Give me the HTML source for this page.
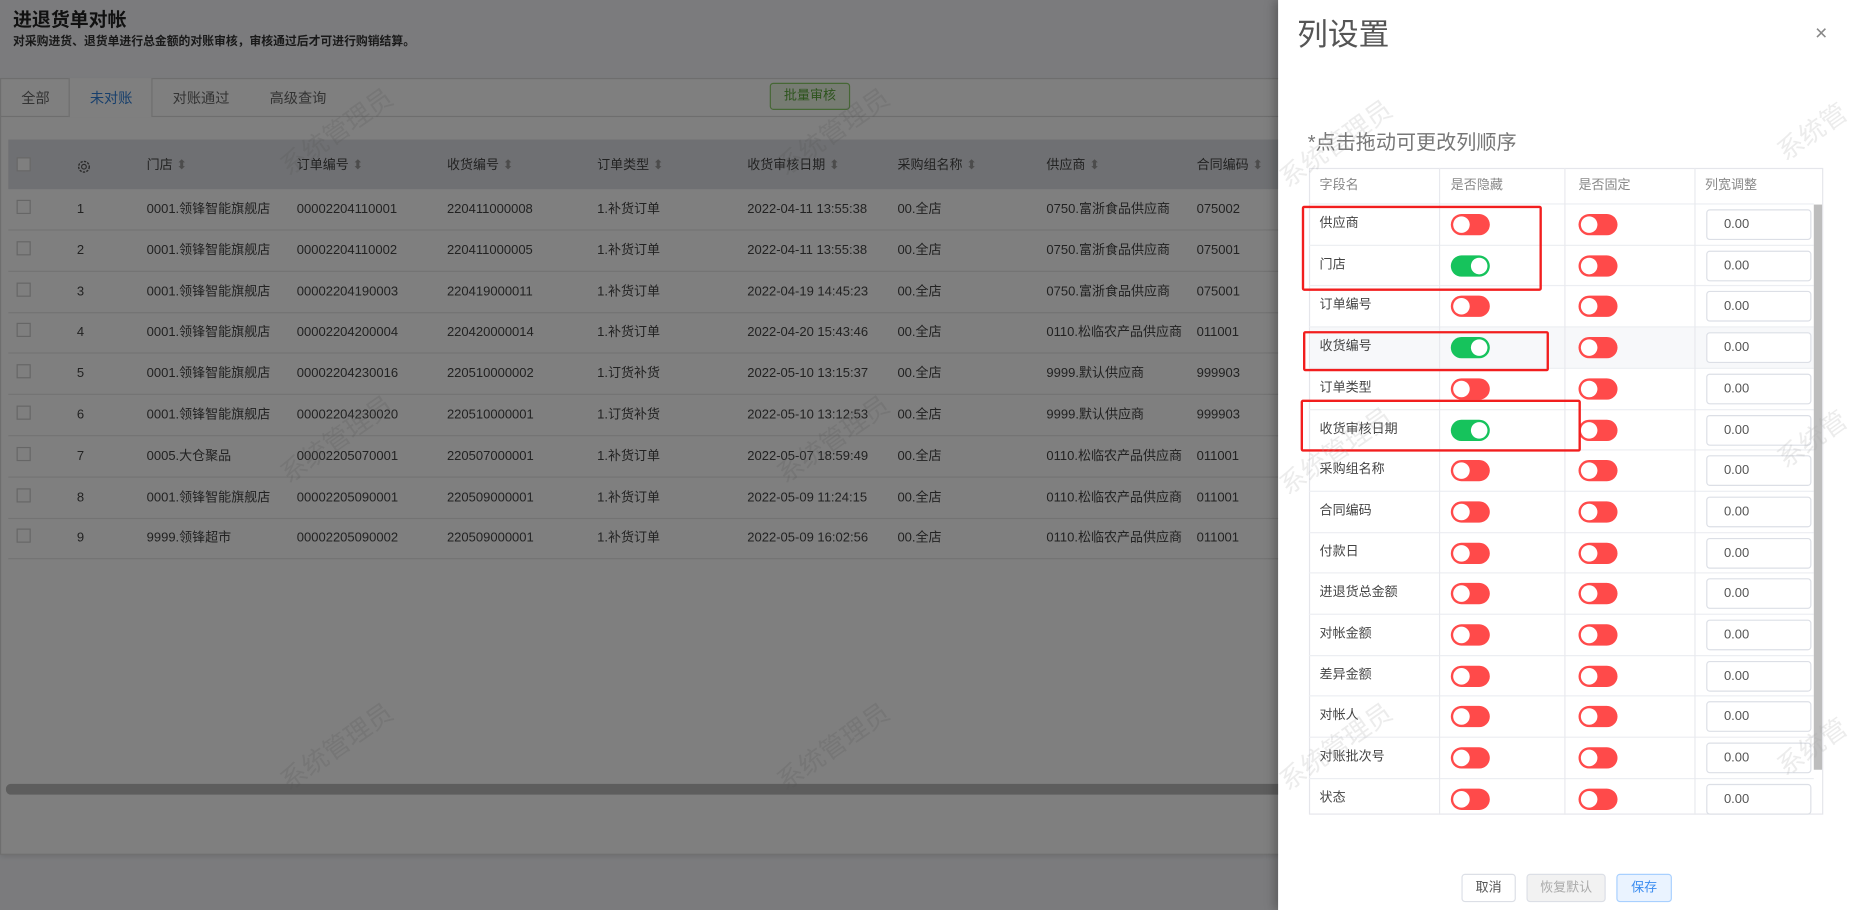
<!DOCTYPE html>
<html><head><meta charset="utf-8"><style>
*{box-sizing:border-box;margin:0;padding:0}
html,body{width:1854px;height:910px;overflow:hidden;background:#f6f7fa}
#s{position:absolute;left:0;top:0;width:1568px;height:770px;transform:scale(1.18240);transform-origin:0 0;font-family:"Liberation Sans","Noto Sans CJK SC",sans-serif;color:#333;background:#f6f7fb;overflow:hidden}
.a{position:absolute;white-space:nowrap}
.wm{position:absolute;font-size:22px;line-height:24px;color:rgba(170,170,170,.22);transform:rotate(-35deg);white-space:nowrap}
.c{font-size:11px;line-height:13px;color:#444}
.tg{position:absolute;width:33px;height:18px;border-radius:9px;background:#ff4a4a}
.tg::after{content:"";position:absolute;left:2px;top:2px;width:14px;height:14px;border-radius:50%;background:#fff}
.tg.on{background:#16c35c}.tg.on::after{left:17px}
.inp{position:absolute;width:89px;height:26px;border:1px solid #dcdfe6;border-radius:3px;font-size:11px;line-height:13px;color:#555;padding:6px 0 0 14px;background:#fff}
.rb{position:absolute;border:2px solid #f21e1e;border-radius:2px}
.btn{position:absolute;height:24px;top:739px;border:1px solid #dcdfe6;border-radius:3px;font-size:11px;text-align:center;line-height:22px;background:#fff;color:#555}
.tab{position:absolute;top:76px;font-size:12px;line-height:14px;color:#666}
</style></head><body><div id="s">
<div class="a" style="left:11px;top:8px;font-size:16px;line-height:20px;font-weight:bold;color:#222">进退货单对帐</div>
<div class="a" style="left:11px;top:29px;font-size:10px;line-height:13px;font-weight:bold;color:#333">对采购进货、退货单进行总金额的对账审核，审核通过后才可进行购销结算。</div>
<div class="a" style="left:0;top:66px;width:1100px;height:657px;background:#fff;border:1px solid #ddd;box-shadow:0 2px 4px rgba(0,0,0,.1)"></div>
<div class="a" style="left:0;top:98px;width:1100px;height:1px;background:#ddd"></div>
<div class="a" style="left:58px;top:66px;width:71px;height:33px;background:#fff;border-left:1px solid #ddd;border-right:1px solid #ddd"></div>
<div class="tab" style="left:18px">全部</div>
<div class="tab" style="left:76px;color:#2f7fd8">未对账</div>
<div class="tab" style="left:146px">对账通过</div>
<div class="tab" style="left:228px">高级查询</div>
<div class="a" style="left:651px;top:70px;width:68px;height:23px;border:1px solid #8ccf6a;background:#eef8e6;border-radius:3px;font-size:11px;color:#5aa83a;text-align:center;line-height:21px">批量审核</div>
<div class="a" style="left:7px;top:118px;width:1100px;height:42px;background:#dfe1e6"></div>
<div class="a" style="left:14px;top:133px;width:12px;height:12px;border:1px solid #ccc;background:#fff"></div>
<svg class="a" style="left:65px;top:135px" width="12" height="12" viewBox="0 0 12 12"><circle cx="6" cy="6" r="4.5" fill="none" stroke="#555" stroke-width="1.2" stroke-dasharray="2 1"/><circle cx="6" cy="6" r="2" fill="none" stroke="#555"/></svg>
<div class="a c" style="left:124px;top:134px">门店 <span style="color:#999">⬍</span></div><div class="a c" style="left:251px;top:134px">订单编号 <span style="color:#999">⬍</span></div><div class="a c" style="left:378px;top:134px">收货编号 <span style="color:#999">⬍</span></div><div class="a c" style="left:505px;top:134px">订单类型 <span style="color:#999">⬍</span></div><div class="a c" style="left:632px;top:134px">收货审核日期 <span style="color:#999">⬍</span></div><div class="a c" style="left:759px;top:134px">采购组名称 <span style="color:#999">⬍</span></div><div class="a c" style="left:885px;top:134px">供应商 <span style="color:#999">⬍</span></div><div class="a c" style="left:1012px;top:134px">合同编码 <span style="color:#999">⬍</span></div>
<div id="rows"></div>
<div class="a" style="left:5px;top:663px;width:1100px;height:9px;background:#bbb;border-radius:4px"></div>
<div class="wm" style="left:230px;top:100px">系统管理员</div><div class="wm" style="left:650px;top:100px">系统管理员</div><div class="wm" style="left:230px;top:360px">系统管理员</div><div class="wm" style="left:650px;top:360px">系统管理员</div><div class="wm" style="left:230px;top:620px">系统管理员</div><div class="wm" style="left:650px;top:620px">系统管理员</div>
<div class="a" style="left:0;top:0;width:1081px;height:770px;background:rgba(0,0,0,.5)"></div>
<div class="a" style="left:1081px;top:0;width:487px;height:770px;background:#fff;box-shadow:-3px 0 8px rgba(0,0,0,.25)"></div>
<div class="a" style="left:1097px;top:13px;font-size:26px;line-height:32px;color:#555">列设置</div>
<div class="a" style="left:1535px;top:18px;font-size:18px;line-height:20px;color:#888">×</div>
<div class="a" style="left:1106px;top:111px;font-size:17px;line-height:20px;color:#777">*点击拖动可更改列顺序</div>
<div class="a" style="left:1107px;top:142px;width:435px;height:547px;border:1px solid #e5e6eb"></div>
<div id="dr"></div>
<div class="a" style="left:1217px;top:142px;width:1px;height:547px;background:#e8e9ee"></div>
<div class="a" style="left:1323px;top:142px;width:1px;height:547px;background:#e8e9ee"></div>
<div class="a" style="left:1433px;top:142px;width:1px;height:547px;background:#e8e9ee"></div>
<div class="a c" style="left:1116px;top:151px;color:#888">字段名</div><div class="a c" style="left:1227px;top:151px;color:#888">是否隐藏</div><div class="a c" style="left:1335px;top:151px;color:#888">是否固定</div><div class="a c" style="left:1442px;top:151px;color:#888">列宽调整</div>
<div id="dr2"></div>
<div class="a" style="left:1534px;top:173px;width:7px;height:478px;background:#bdbdbd"></div>
<div class="rb" style="left:1101px;top:174px;width:203px;height:72px"></div>
<div class="rb" style="left:1102px;top:280px;width:208px;height:34px"></div>
<div class="rb" style="left:1100px;top:338px;width:237px;height:44px"></div>
<div class="wm" style="left:1075px;top:110px">系统管理员</div><div class="wm" style="left:1500px;top:100px">系统管</div><div class="wm" style="left:1075px;top:370px">系统管理员</div><div class="wm" style="left:1500px;top:360px">系统管</div><div class="wm" style="left:1075px;top:620px">系统管理员</div><div class="wm" style="left:1500px;top:620px">系统管</div>
<div class="btn" style="left:1236px;width:46px">取消</div>
<div class="btn" style="left:1291px;width:67px;background:#f2f2f2;color:#aaa">恢复默认</div>
<div class="btn" style="left:1367px;width:47px;background:#eaf3ff;border-color:#a8d0ff;color:#3b8cf0">保存</div>
</div>
<script>
var d=[["0001.领锋智能旗舰店","00002204110001","220411000008","1.补货订单","2022-04-11 13:55:38","0750.富浙食品供应商","075002"],["0001.领锋智能旗舰店","00002204110002","220411000005","1.补货订单","2022-04-11 13:55:38","0750.富浙食品供应商","075001"],["0001.领锋智能旗舰店","00002204190003","220419000011","1.补货订单","2022-04-19 14:45:23","0750.富浙食品供应商","075001"],["0001.领锋智能旗舰店","00002204200004","220420000014","1.补货订单","2022-04-20 15:43:46","0110.松临农产品供应商","011001"],["0001.领锋智能旗舰店","00002204230016","220510000002","1.订货补货","2022-05-10 13:15:37","9999.默认供应商","999903"],["0001.领锋智能旗舰店","00002204230020","220510000001","1.订货补货","2022-05-10 13:12:53","9999.默认供应商","999903"],["0005.大仓聚品","00002205070001","220507000001","1.补货订单","2022-05-07 18:59:49","0110.松临农产品供应商","011001"],["0001.领锋智能旗舰店","00002205090001","220509000001","1.补货订单","2022-05-09 11:24:15","0110.松临农产品供应商","011001"],["9999.领锋超市","00002205090002","220509000001","1.补货订单","2022-05-09 16:02:56","0110.松临农产品供应商","011001"]];
var h="";d.forEach(function(r,i){var y=160+i*34.8;h+='<div class="a" style="left:7px;top:'+(y+34)+'px;width:1100px;height:1px;background:#e6e6e6"></div><div class="a" style="left:14px;top:'+(y+9)+'px;width:12px;height:12px;border:1px solid #ccc"></div>';var xs=[65,124,251,378,505,632,759,885,1012];var v=[i+1,r[0],r[1],r[2],r[3],r[4],"00.全店",r[5],r[6]];v.forEach(function(t,j){h+='<div class="a c" style="left:'+xs[j]+'px;top:'+(y+11)+'px">'+t+'</div>'})});
document.getElementById("rows").innerHTML=h;
var f=["供应商","门店","订单编号","收货编号","订单类型","收货审核日期","采购组名称","合同编码","付款日","进退货总金额","对帐金额","差异金额","对帐人","对账批次号","状态"],on=[1,3,5];h="";var h2="";
f.forEach(function(t,i){var y=172+i*34.7;h+='<div class="a" style="left:1107px;top:'+y+'px;width:427px;height:1px;background:#eceef2"></div>'+(i==3?'<div class="a" style="left:1108px;top:'+(y+1)+'px;width:426px;height:34px;background:#f7f8fa"></div>':'');h2+='<div class="a c" style="left:1116px;top:'+(y+11)+'px">'+t+'</div><div class="tg'+(on.indexOf(i)>=0?' on':'')+'" style="left:1227px;top:'+(y+9)+'px"></div><div class="tg" style="left:1335px;top:'+(y+9)+'px"></div><div class="inp" style="left:1443px;top:'+(y+5)+'px">0.00</div>'});
document.getElementById("dr").innerHTML=h;document.getElementById("dr2").innerHTML=h2;
</script>
</body></html>
